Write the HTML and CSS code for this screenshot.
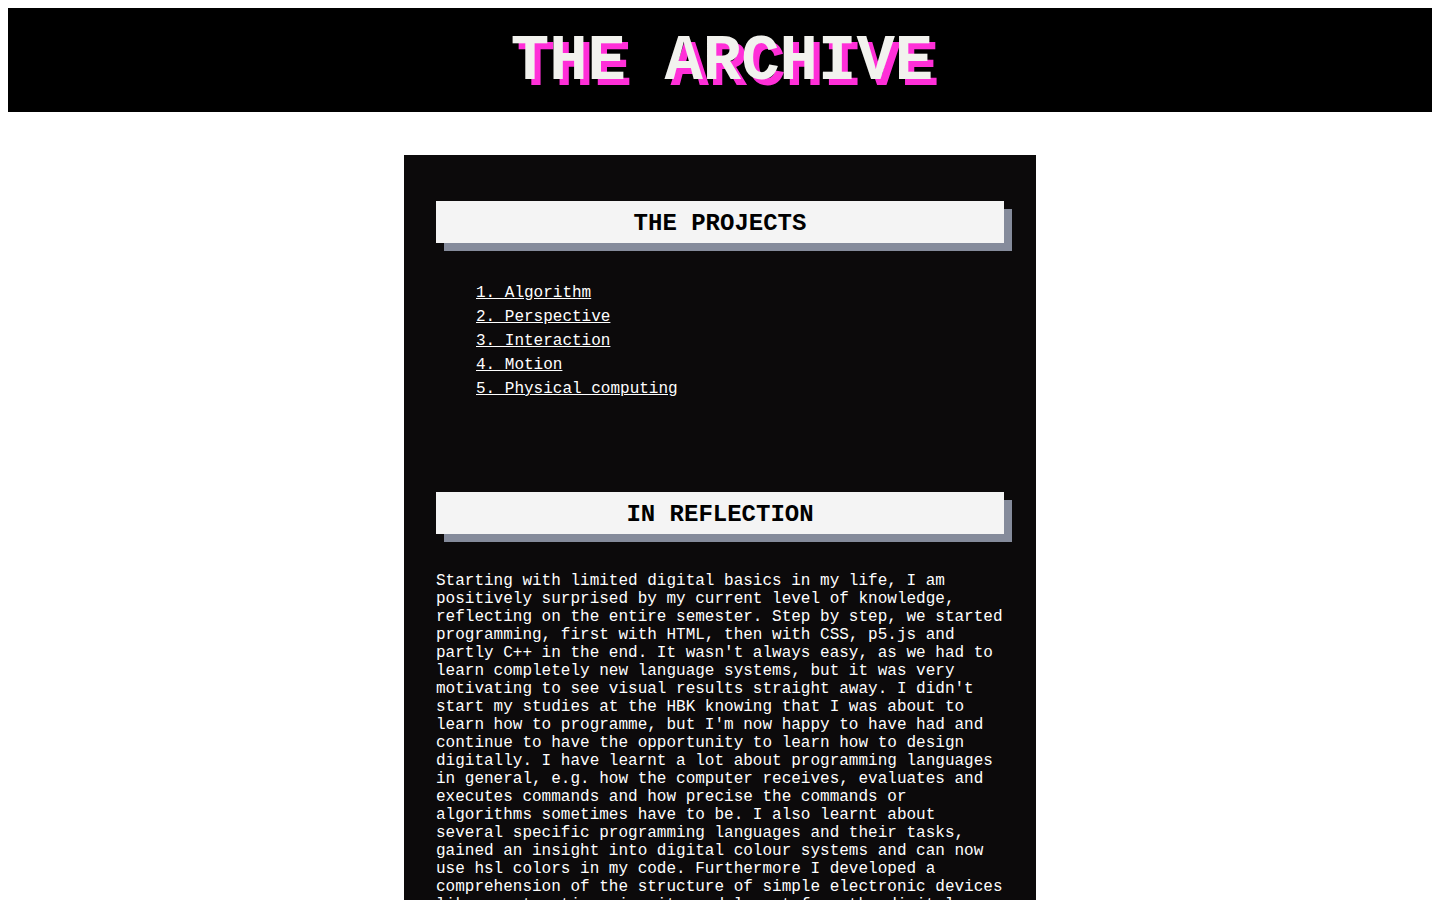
FILE: index.html
```html
<!DOCTYPE html>
<html lang="en">
<head>
<meta charset="utf-8">
<title>The Archive</title>
<link rel="stylesheet" href="styles.css">
</head>
<body>
<header class="site-header">
  <h1 class="site-title">THE ARCHIVE</h1>
</header>
<main class="archive">
  <section class="block">
    <h2 class="section-title">THE PROJECTS</h2>
    <ul class="project-list">
      <li><a href="#">1. Algorithm</a></li>
      <li><a href="#">2. Perspective</a></li>
      <li><a href="#">3. Interaction</a></li>
      <li><a href="#">4. Motion</a></li>
      <li><a href="#">5. Physical computing</a></li>
    </ul>
  </section>
  <section class="block block-reflection">
    <h2 class="section-title">IN REFLECTION</h2>
    <p class="reflection">Starting with limited digital basics in my life, I am positively surprised by my current level of knowledge, reflecting on the entire semester. Step by step, we started programming, first with HTML, then with CSS, p5.js and partly C++ in the end. It wasn't always easy, as we had to learn completely new language systems, but it was very motivating to see visual results straight away. I didn't start my studies at the HBK knowing that I was about to learn how to programme, but I'm now happy to have had and continue to have the opportunity to learn how to design digitally. I have learnt a lot about programming languages in general, e.g. how the computer receives, evaluates and executes commands and how precise the commands or algorithms sometimes have to be. I also learnt about several specific programming languages and their tasks, gained an insight into digital colour systems and can now use hsl colors in my code. Furthermore I developed a comprehension of the structure of simple electronic devices like constructing circuits and learnt from the digital world how to connect it with the physical one.</p>
  </section>
</main>
</body>
</html>
```
FILE: styles.css
```css
body {
  margin: 8px;
  background: #ffffff;
  font-family: "Courier New", "Liberation Mono", monospace;
}

.site-header {
  background: #000000;
  height: 104px;
  display: flex;
  align-items: center;
  justify-content: center;
}

.site-title {
  margin: 0;
  padding: 4px 0 0 4px;
  font-size: 64px;
  font-weight: bold;
  color: #f2f2ee;
  line-height: 1;
  text-shadow: 6px 6px 0 #ff2fd8;
}

.archive {
  width: 568px;
  margin: 43px auto 0;
  padding: 46px 32px 40px;
  background: #0c0a0b;
}

.section-title {
  margin: 0;
  height: 40px;
  padding-top: 2px;
  line-height: 42px;
  background: #f4f4f4;
  color: #000000;
  font-size: 24px;
  font-weight: bold;
  text-align: center;
  box-shadow: 8px 8px 0 #858b9b;
}

.project-list {
  list-style: none;
  margin: 38px 0 0;
  padding-left: 40px;
}

.project-list li {
  font-size: 16px;
  line-height: 24px;
}

.project-list a {
  color: #ffffff;
  text-decoration: underline;
}

.block-reflection {
  margin-top: 91px;
}

.reflection {
  margin: 38px 0 0;
  color: #ffffff;
  font-size: 16px;
  line-height: 18px;
}
```
